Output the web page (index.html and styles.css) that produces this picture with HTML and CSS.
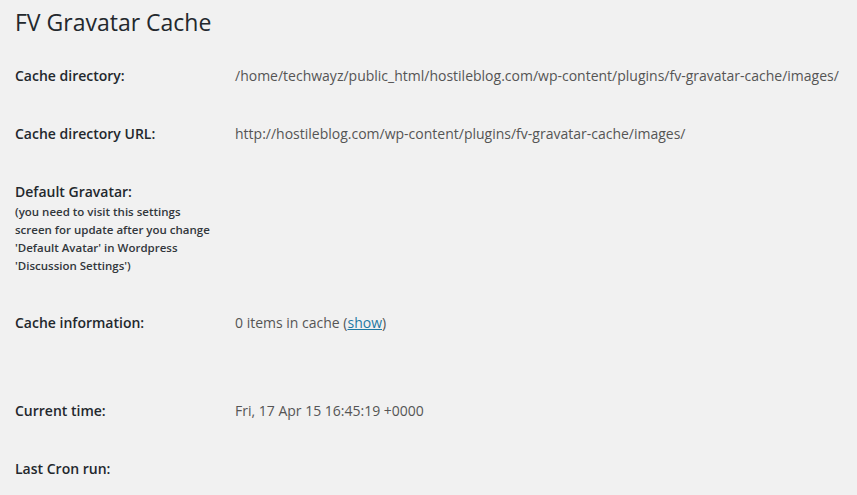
FILE: index.html
```html
<!DOCTYPE html>
<html lang="en">
<head>
<meta charset="utf-8">
<title>FV Gravatar Cache</title>
<link rel="stylesheet" href="styles.css">
</head>
<body>
<div class="wrap">
  <h2 class="page-title">FV Gravatar Cache</h2>
  <table class="form-table">
    <tbody>
      <tr>
        <th>Cache directory:</th>
        <td>/home/techwayz/public_html/hostileblog.com/wp-content/plugins/fv-gravatar-cache/images/</td>
      </tr>
      <tr>
        <th>Cache directory URL:</th>
        <td>http://hostileblog.com/wp-content/plugins/fv-gravatar-cache/images/</td>
      </tr>
      <tr>
        <th>Default Gravatar:<br><small>(you need to visit this settings screen for update after you change 'Default Avatar' in Wordpress 'Discussion Settings')</small></th>
        <td></td>
      </tr>
      <tr>
        <th>Cache information:</th>
        <td class="tall">0 items in cache (<a href="#" class="link">show</a>)</td>
      </tr>
      <tr>
        <th>Current time:</th>
        <td>Fri, 17 Apr 15 16:45:19 +0000</td>
      </tr>
      <tr>
        <th>Last Cron run:</th>
        <td></td>
      </tr>
    </tbody>
  </table>
</div>
</body>
</html>
```

FILE: styles.css
```css
html, body {
  margin: 0;
  padding: 0;
  background: #f1f1f1;
}
body {
  font-family: "Open Sans", "Liberation Sans", sans-serif;
  font-size: 14px;
  color: #444;
  height: 495px;
  overflow: hidden;
}
.wrap {
  padding: 0 15px;
}
.page-title {
  margin: 0;
  padding: 8px 0 4px;
  font-size: 23px;
  font-weight: 400;
  line-height: 29px;
  color: #23282d;
}
.form-table {
  border-collapse: collapse;
  margin-top: 6px;
}
.form-table th {
  width: 200px;
  min-width: 200px;
  padding: 20px 20px 20px 0;
  text-align: left;
  vertical-align: top;
  font-weight: 600;
  line-height: 1.3;
  color: #23282d;
}
.form-table th small {
  font-size: 11.5px;
  font-weight: 600;
  color: #32373c;
}
.form-table td {
  padding: 20px 10px 20px 0;
  vertical-align: top;
  line-height: 1.3;
  color: #555;
  white-space: nowrap;
}
.form-table td.tall {
  padding-bottom: 49px;
}
.link {
  color: #1f79a3;
  text-decoration: underline;
}
```
